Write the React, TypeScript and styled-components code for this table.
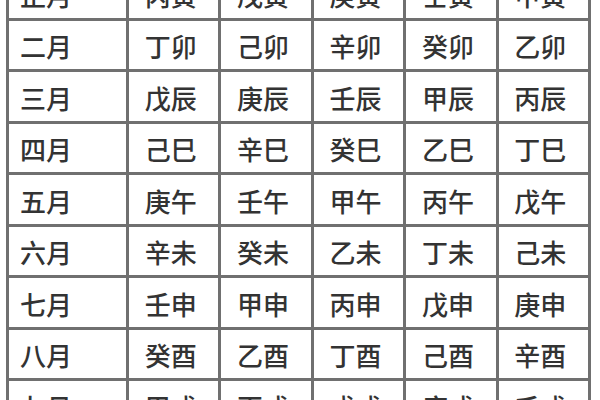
import React from 'react';
import styled, { createGlobalStyle } from 'styled-components';

const GlobalStyle = createGlobalStyle`
    html, body {
        margin: 0;
        padding: 0;
        background: #ffffff;
        overflow: hidden;
    }
    body {
        width: 600px;
        height: 400px;
        font-family: "Noto Sans CJK SC", "Noto Sans", sans-serif;
    }
`;

const rows: [string, string[]][] = [
    ['正月', ['丙寅', '戊寅', '庚寅', '壬寅', '甲寅']],
    ['二月', ['丁卯', '己卯', '辛卯', '癸卯', '乙卯']],
    ['三月', ['戊辰', '庚辰', '壬辰', '甲辰', '丙辰']],
    ['四月', ['己巳', '辛巳', '癸巳', '乙巳', '丁巳']],
    ['五月', ['庚午', '壬午', '甲午', '丙午', '戊午']],
    ['六月', ['辛未', '癸未', '乙未', '丁未', '己未']],
    ['七月', ['壬申', '甲申', '丙申', '戊申', '庚申']],
    ['八月', ['癸酉', '乙酉', '丁酉', '己酉', '辛酉']],
    ['九月', ['甲戌', '丙戌', '戊戌', '庚戌', '壬戌']],
];

const Page = styled.div`
    width: 600px;
    height: 400px;
    overflow: hidden;
`;

// the top row is partly scrolled out of view in the shot
const Table = styled.div`
    display: grid;
    grid-template-columns: 117px repeat(5, 1fr);
    grid-auto-rows: 48.5px;
    gap: 3px;
    padding: 3px;
    width: 585px;
    box-sizing: border-box;
    margin: -34px 0 0 6px;
    background: #707070;
`;

const Cell = styled.div<{ $month?: boolean }>`
    background: #ffffff;
    display: flex;
    align-items: center;
    justify-content: ${({ $month }) => ($month ? 'flex-start' : 'center')};
    padding: ${({ $month }) => ($month ? '3px 0 0 11px' : '3px 6px 0 0')};
    font-size: 26px;
    font-weight: 500;
    line-height: 1;
    color: #333333;
    white-space: nowrap;
`;

export default function App() {
    return (
        <Page>
            <GlobalStyle />
            <Table>
                {rows.map(([month, stems]) => (
                    <React.Fragment key={month}>
                        <Cell $month>{month}</Cell>
                        {stems.map((s) => (
                            <Cell key={s}>{s}</Cell>
                        ))}
                    </React.Fragment>
                ))}
            </Table>
        </Page>
    );
}
